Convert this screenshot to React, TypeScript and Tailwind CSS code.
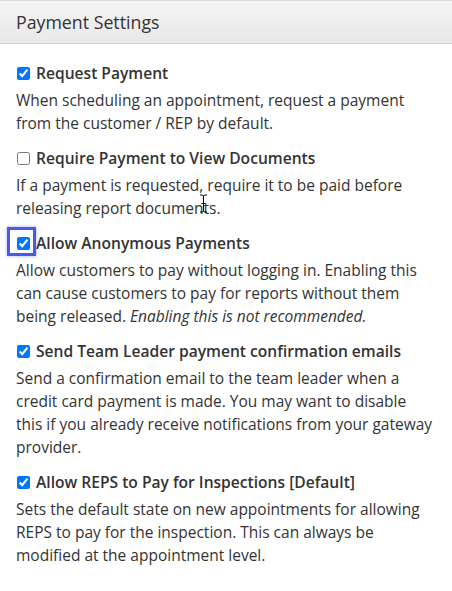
import React from 'react';

type Setting = {
  label: string;
  checked: boolean;
  focused?: boolean;
  description: React.ReactNode;
};

const settings: Setting[] = [
  {
    label: 'Request Payment',
    checked: true,
    description: 'When scheduling an appointment, request a payment from the customer / REP by default.',
  },
  {
    label: 'Require Payment to View Documents',
    checked: false,
    description: 'If a payment is requested, require it to be paid before releasing report documents.',
  },
  {
    label: 'Allow Anonymous Payments',
    checked: true,
    focused: true,
    description: (
      <>
        Allow customers to pay without logging in. Enabling this can cause customers to pay for reports
        without them being released. <em>Enabling this is not recommended.</em>
      </>
    ),
  },
  {
    label: 'Send Team Leader payment confirmation emails',
    checked: true,
    description:
      'Send a confirmation email to the team leader when a credit card payment is made. You may want to disable this if you already receive notifications from your gateway provider.',
  },
  {
    label: 'Allow REPS to Pay for Inspections [Default]',
    checked: true,
    description:
      'Sets the default state on new appointments for allowing REPS to pay for the inspection. This can always be modified at the appointment level.',
  },
];

export default function App() {
  return (
    <div className="relative min-h-[591px] w-[452px] bg-white text-[#333] font-['Open_Sans',sans-serif]">
      {/* Panel header */}
      <div className="h-[44px] border-t border-b border-t-[#dcdcdc] border-b-[#cfcfcf] bg-gradient-to-b from-[#f5f5f5] to-[#e8e8e8] px-4 flex items-center">
        <h2 className="text-[17.75px] leading-[24px] text-[#333]">Payment Settings</h2>
      </div>

      {/* Settings list */}
      <div className="px-4 pt-[18px] flex flex-col gap-3">
        {settings.map((s) => (
          <div key={s.label}>
            <label className="flex items-center gap-[6px] text-[15.6px] leading-[23px] font-semibold">
              <span className="relative ml-px flex h-[13px] w-[13px]">
                <input
                  type="checkbox"
                  defaultChecked={s.checked}
                  className="m-0 h-[13px] w-[13px] accent-[#0075ff]"
                />
                {s.focused && (
                  <span className="pointer-events-none absolute -left-[10px] -top-[10px] h-[29px] w-[29px] border-[3px] border-[#4a5ae8] shadow-[0_0_3px_rgba(74,90,232,0.5)]" />
                )}
              </span>
              {s.label}
            </label>
            <p className="mt-1 text-[15.5px] leading-[23px]">{s.description}</p>
          </div>
        ))}
      </div>

      {/* Mouse I-beam cursor */}
      <svg
        className="pointer-events-none absolute left-[199px] top-[194px]"
        width="9"
        height="19"
        viewBox="0 0 9 19"
      >
        <path d="M1 1h2.5l1 1 1-1H8M4.5 2v15M1 18h2.5l1-1 1 1H8M2.5 9.5h4" fill="none" stroke="#000" strokeWidth="1" />
      </svg>
    </div>
  );
}
